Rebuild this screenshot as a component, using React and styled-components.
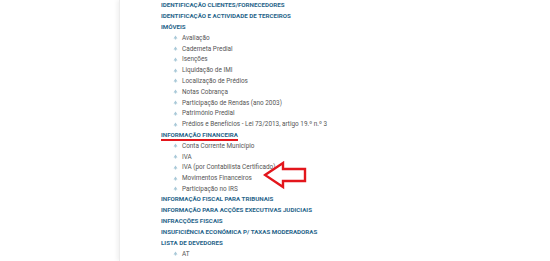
import React from "react";
import styled, { createGlobalStyle } from "styled-components";

const GlobalStyle = createGlobalStyle`
  html, body {
    margin: 0;
    padding: 0;
    background: #fff;
    overflow: hidden;
  }
`;

const menu = [
  { title: "IDENTIFICAÇÃO CLIENTES/FORNECEDORES" },
  { title: "IDENTIFICAÇÃO E ACTIVIDADE DE TERCEIROS" },
  {
    title: "IMÓVEIS",
    items: [
      "Avaliação",
      "Caderneta Predial",
      "Isenções",
      "Liquidação de IMI",
      "Localização de Prédios",
      "Notas Cobrança",
      "Participação de Rendas (ano 2003)",
      "Património Predial",
      "Prédios e Benefícios - Lei 73/2013, artigo 19.º n.º 3",
    ],
  },
  {
    title: "INFORMAÇÃO FINANCEIRA",
    marked: true,
    items: [
      "Conta Corrente Município",
      "IVA",
      "IVA (por Contabilista Certificado)",
      "Movimentos Financeiros",
      "Participação no IRS",
    ],
  },
  { title: "INFORMAÇÃO FISCAL PARA TRIBUNAIS" },
  { title: "INFORMAÇÃO PARA ACÇÕES EXECUTIVAS JUDICIAIS" },
  { title: "INFRACÇÕES FISCAIS" },
  { title: "INSUFICIÊNCIA ECONÓMICA P/ TAXAS MODERADORAS" },
  { title: "LISTA DE DEVEDORES", items: ["AT", "Segurança Social"] },
];

const Bullet = () => (
  <svg width="5" height="5" viewBox="0 0 10 10">
    <path d="M5 1 L9 7 L6.3 7 L6.3 9 L3.7 9 L3.7 7 L1 7 Z" fill="#a9c9d8" />
  </svg>
);

const App = () => {
  return (
    <Page>
      <GlobalStyle />
      <Gutter />
      <Panel>
        <List>
          {menu.map((group) => (
            <React.Fragment key={group.title}>
              <Heading $marked={group.marked}>{group.title}</Heading>
              {group.items &&
                group.items.map((item) => (
                  <Item key={item}>
                    <Bullet />
                    <span>{item}</span>
                  </Item>
                ))}
            </React.Fragment>
          ))}
        </List>
        <Arrow width="46" height="30" viewBox="0 0 46 30">
          <path
            d="M2 14 L20 2 L20 8 L42 8 L42 20 L20 20 L20 26 Z"
            fill="#fff"
            stroke="#e3161c"
            strokeWidth="2.4"
            strokeLinejoin="miter"
          />
        </Arrow>
      </Panel>
    </Page>
  );
};

export default App;

const Page = styled.div`
  display: flex;
  width: 550px;
  height: 261px;
  overflow: hidden;
  font-family: "Roboto", "Liberation Sans", sans-serif;
`;

const Gutter = styled.div`
  width: 119px;
  flex-shrink: 0;
`;

const Panel = styled.div`
  position: relative;
  flex: 1;
  border-left: 1px solid #ececec;
  box-shadow: -2px 0 4px rgba(0, 0, 0, 0.06);
  padding-left: 41px;
`;

const List = styled.div`
  display: flex;
  flex-direction: column;
  margin-top: 0;
`;

const Heading = styled.div`
  position: relative;
  height: 10.8px;
  line-height: 10.8px;
  font-size: 6.2px;
  font-weight: 700;
  color: #28658a;
  white-space: nowrap;
  align-self: flex-start;

  &::after {
    content: "";
    display: ${(p) => (p.$marked ? "block" : "none")};
    position: absolute;
    left: 0;
    right: 0;
    bottom: -0.5px;
    height: 2px;
    background: #e3161c;
  }
`;

const Item = styled.div`
  display: flex;
  align-items: center;
  gap: 4px;
  height: 10.8px;
  padding-left: 12px;
  font-size: 6.4px;
  color: #555;
  white-space: nowrap;

  svg {
    flex-shrink: 0;
  }
`;

const Arrow = styled.svg`
  position: absolute;
  left: 143px;
  top: 161px;
`;
